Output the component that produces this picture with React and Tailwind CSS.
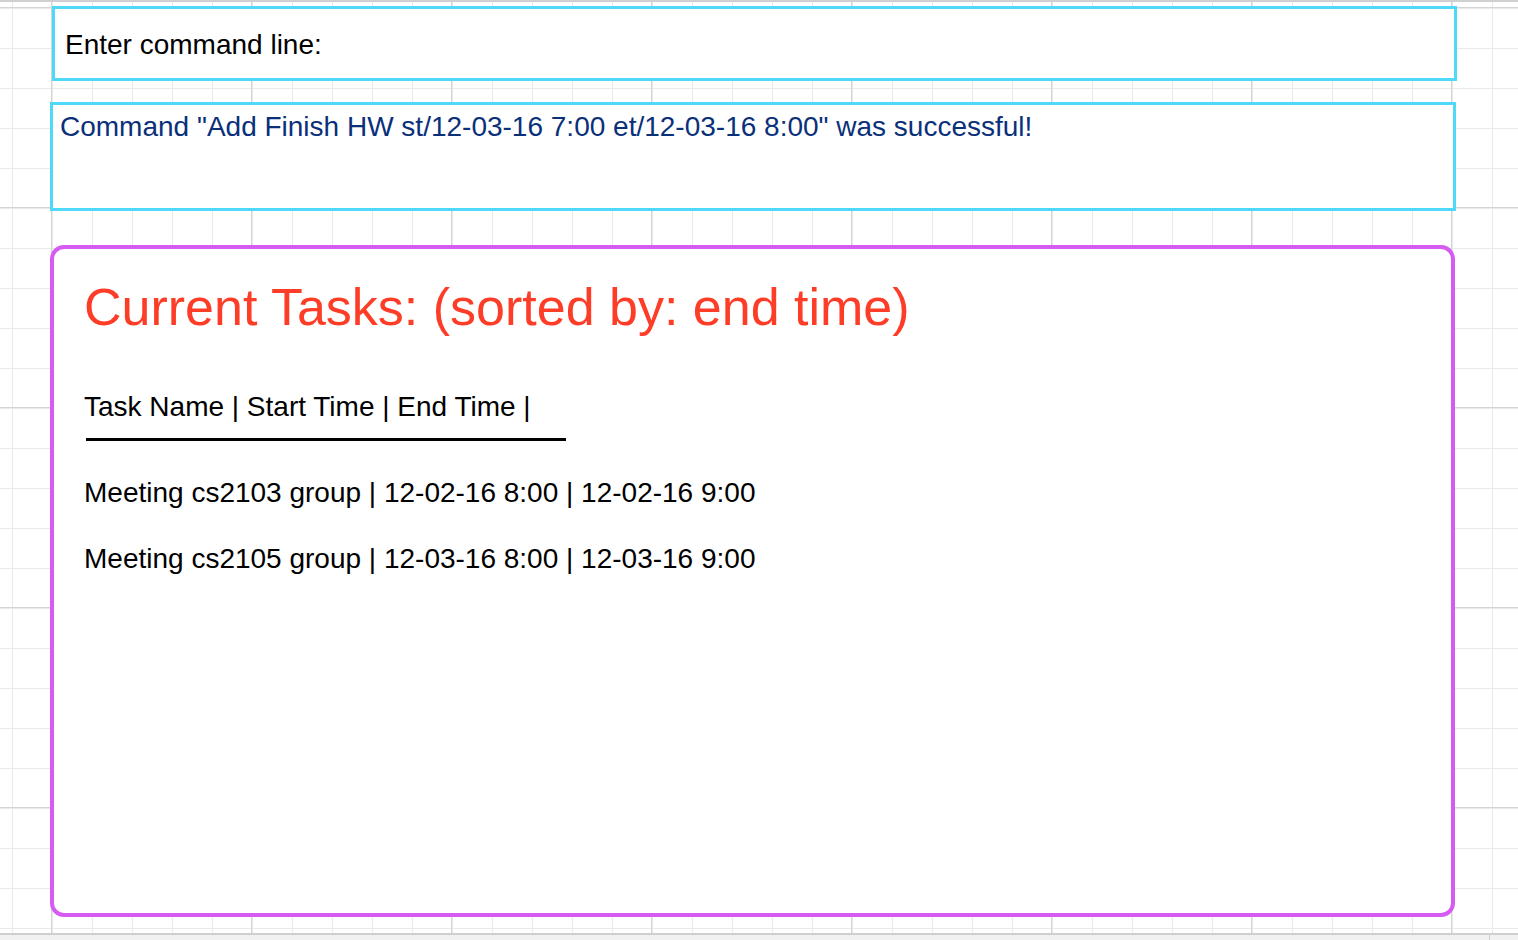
export default function App() {
  return (
    <div
      className="relative flex h-[940px] w-full flex-col overflow-hidden bg-white [background-image:linear-gradient(to_right,#d4d4d4_1px,transparent_1px),linear-gradient(to_bottom,#d4d4d4_1px,transparent_1px),linear-gradient(to_right,#e9e9e9_1px,transparent_1px),linear-gradient(to_bottom,#e9e9e9_1px,transparent_1px)] [background-size:200px_200px,200px_200px,40px_40px,40px_40px] [background-position:51px_0,0_7px,12px_0,0_8px] font-['Liberation_Sans',Arial,sans-serif]"
    >
      <div className="h-[2px] w-full shrink-0 bg-[#d0d0d0]" />

      <div className="ml-[52px] mt-[4px] flex h-[75px] w-[1405px] shrink-0 items-center border-[3px] border-[#4fd8f8] bg-white pl-[10px] pt-[2px] text-[28px] leading-[32px] text-black">
        Enter command line:
      </div>

      <div className="ml-[50px] mt-[21px] h-[109px] w-[1406px] shrink-0 border-[3px] border-[#4fd8f8] bg-white pl-[7px] pt-[6px] text-[28px] leading-[32px] text-[#0b307a]">
        Command "Add Finish HW st/12-03-16 7:00 et/12-03-16 8:00" was successful!
      </div>

      <div className="ml-[50px] mt-[34px] flex h-[672px] w-[1405px] shrink-0 flex-col rounded-[14px] border-[4px] border-[#d65bf2] bg-white pl-[30px] pt-[28px]">
        <div className="text-[52px] leading-[60px] text-[#fd3d27]">
          Current Tasks: (sorted by: end time)
        </div>
        <div className="mt-[54px] text-[28px] leading-[32px] text-black">
          Task Name | Start Time | End Time |
        </div>
        <div className="ml-[2px] mt-[15px] h-[3px] w-[480px] bg-black" />
        <div className="mt-[36px] text-[28px] leading-[32px] text-black">
          Meeting cs2103 group | 12-02-16 8:00 | 12-02-16 9:00
        </div>
        <div className="mt-[34px] text-[28px] leading-[32px] text-black">
          Meeting cs2105 group | 12-03-16 8:00 | 12-03-16 9:00
        </div>
      </div>

      <div className="flex-1" />
      <div className="flex h-[7px] w-full shrink-0 border-t-[2px] border-[#cfcfcf] bg-[#f1f1f1]">
        <div className="ml-[1489px] h-full w-[1px] bg-[#cfcfcf]" />
      </div>
    </div>
  );
}
